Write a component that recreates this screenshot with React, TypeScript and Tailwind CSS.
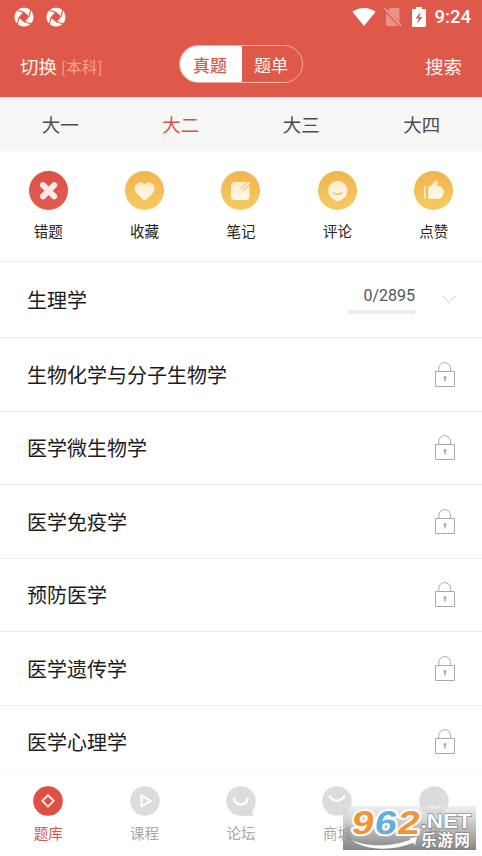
import React from "react";

const subjects = ["生物化学与分子生物学", "医学微生物学", "医学免疫学", "预防医学", "医学遗传学", "医学心理学"];

const AppMark = () => (
  <svg width="20" height="20" viewBox="0 0 20 20">
    <circle cx="10" cy="10" r="9.6" fill="#fffaf5" />
    <path d="M9.6 4.6L15.4 9.6L10.4 15.4L4.6 10.4Z" fill="#de594a" />
    {[0, 90, 180, 270].map((a) => (
      <path key={a} d="M9.8 5.2L2.8 3.2" fill="none" stroke="#de594a" strokeWidth="1.1" transform={`rotate(${a} 10 10)`} />
    ))}
  </svg>
);

const StatusBar = () => (
  <div className="flex h-[34px] items-center justify-between pl-[14px] pr-[11px]">
    <div className="flex gap-3">
      <AppMark />
      <AppMark />
    </div>
    <div className="flex items-center">
      <svg width="24" height="20" viewBox="0 0 24 20" className="mr-[8px]">
        <path d="M.5 5C7-.5 17-.5 23.5 5L12 19Z" fill="#fff" />
      </svg>
      <svg width="18" height="20" viewBox="0 0 18 20" className="mr-[10px]">
        <path d="M2 5.5L6 1h8.5a1 1 0 0 1 1 1v16a1 1 0 0 1-1 1H3a1 1 0 0 1-1-1Z" fill="#eb9085" />
        <path d="M0 2L17 19" stroke="#de594a" strokeWidth="3" />
        <path d="M.5 1.5L17 18.5" stroke="#f0a69d" strokeWidth="1.3" />
      </svg>
      <svg width="14" height="20" viewBox="0 0 14 20" className="mr-[9px]">
        <path d="M4 0h6v2h3a1 1 0 0 1 1 1v16a1 1 0 0 1-1 1H1a1 1 0 0 1-1-1V3a1 1 0 0 1 1-1h3Z" fill="#fff" />
        <path d="M8.5 5L3.5 11.5H7L5 17L10.5 10H7.3Z" fill="#de594a" />
      </svg>
      <span className="font-[Roboto] text-[18.5px] font-medium leading-5 text-white">9:24</span>
    </div>
  </div>
);

const QuickGlyph = ({ index }: { index: number }) => {
  const color = "#fff4e3";
  return (
    <svg width="39" height="39" viewBox="0 0 39 39">
      <defs>
        <linearGradient id={`disc${index}`} x1="0" y1="0" x2="0" y2="1">
          <stop offset="0" stopColor={index ? "#f2b44d" : "#db5345"} />
          <stop offset="1" stopColor={index ? "#f5cb62" : "#e25c50"} />
        </linearGradient>
        <linearGradient id={`glyph${index}`} x1="0" y1="0" x2="0" y2="1">
          <stop offset="0" stopColor="#fdeac8" />
          <stop offset="1" stopColor="#fffaf0" />
        </linearGradient>
      </defs>
      <circle cx="19.5" cy="19.5" r="19.5" fill={`url(#disc${index})`} />
      {index === 0 && <path d="M14 14.2L25.2 25.4M25.2 14.2L14 25.4" stroke="#ffeae7" strokeWidth="6" strokeLinecap="round" />}
      {index === 1 && <path d="M19.7 13.1C22.6 10.4 26.3 11.4 28.2 13.5C30.6 16.3 29.9 20.2 27 23.2L21.7 28.2Q19.7 30 17.7 28.2L12.4 23.2C9.4 20.2 8.9 16.3 11.3 13.5C13.2 11.4 16.8 10.4 19.7 13.1Z" fill={`url(#glyph${index})`} />}
      {index === 2 && (
        <>
          <rect x="10" y="11" width="18.5" height="18" rx="4" fill={`url(#glyph${index})`} />
          <path d="M20.8 18.8L28 11.8" stroke="#f3bd54" strokeWidth="3.8" />
          <path d="M20.6 19L28 11.8" stroke={color} strokeWidth="1.8" strokeLinecap="round" />
        </>
      )}
      {index === 3 && (
        <>
          <path d="M19.8 10A9.6 9.6 0 0 1 23.5 28.5L20.2 30.2L16.7 28.7A9.6 9.6 0 0 1 19.8 10Z" fill={`url(#glyph${index})`} />
          <path d="M15.4 21.8Q19.6 25.3 23.8 21.8" fill="none" stroke="#f1ba52" strokeWidth="1.4" strokeLinecap="round" />
        </>
      )}
      {index === 4 && (
        <>
          <path d="M11 16V27.2" stroke={color} strokeWidth="1.6" strokeLinecap="round" />
          <path d="M14.3 16.2Q18 14.7 20.5 10.2Q21.2 9 22.6 9.6Q24 10.3 23.7 12.8L23.2 15H25.5Q29.8 16.5 29.8 21.2Q29.7 26 25.5 27.8H15.3Q14.3 27.8 14.3 26.8Z" fill={`url(#glyph${index})`} />
        </>
      )}
    </svg>
  );
};

const Lock = () => (
  <svg width="20" height="25" viewBox="0 0 20 25" fill="none" stroke="#aaa">
    <path d="M3.8 9V6.5a5.9 5.9 0 0 1 11.8 0V9" />
    <path d="M.5 9.5h19v15H.5Z" />
    <path d="M10 14.6V19.6" strokeWidth="1.4" />
    <circle cx="10" cy="15.6" r="1.5" fill="#aaa" stroke="none" />
  </svg>
);

const NavGlyph = ({ index }: { index: number }) => (
  <svg width="30" height="30" viewBox="0 0 30 30" fill="none" stroke="#fff" strokeWidth="2" strokeLinecap="round" strokeLinejoin="round">
    <circle cx="15" cy="15" r="14.8" fill={index ? "#dcdcdc" : "#df5044"} stroke="none" />
    {index === 2 && <path d="M29 20L26.2 25.5Q26.5 28 27.5 29.8H15Z" fill="#dcdcdc" stroke="none" />}
    {index === 0 && <path d="M15 9.2L20.7 14.9L15 20.6L9.3 14.9Z" stroke="#ffeae7" />}
    {index === 1 && <path d="M11.5 9.5V20.5L20.8 15Z" />}
    {index === 2 && <path d="M8.2 12.5C9.5 20.3 20 20.3 21.8 12.5" strokeWidth="2.3" />}
    {index === 3 && <path d="M7.8 10.3C11 16.2 19 16.2 22.2 10.3" strokeWidth="2.3" />}
    {index === 4 && <path d="M9.8 20.2Q15 23.8 20.2 20.2" />}
  </svg>
);

const Watermark = () => (
  <svg className="absolute left-[343px] top-[806px]" width="133" height="44" viewBox="0 0 133 44">
    <defs>
      <linearGradient id="shade" x1="0" y1="0" x2="0" y2="1">
        <stop offset="0" stopColor="#e6e6e6" stopOpacity=".6" />
        <stop offset=".5" stopColor="#a0a0a0" stopOpacity=".7" />
        <stop offset="1" stopColor="#707070" stopOpacity=".85" />
      </linearGradient>
    </defs>
    <rect width="133" height="44" fill="url(#shade)" />
    <path d="M7 33C25 42 51 40 67 33.5L66 32L74.5 30.5L72 40L70 37C49 46 20 45 7 33Z" fill="#fff" stroke="#777" strokeWidth=".4" />
    <g fontFamily="Liberation Sans, sans-serif" fontWeight="bold" strokeLinejoin="round">
      <g transform="translate(7.5 28) skewX(-9) scale(1.2 1)" fontSize="33" letterSpacing=".4">
        <text stroke="#fff" strokeWidth="4" paintOrder="stroke">
          <tspan fill="#f29334" x="0">9</tspan>
          <tspan fill="#62aee0" x="19.2">6</tspan>
          <tspan fill="#f29334" x="38.4">2</tspan>
        </text>
      </g>
      <text transform="translate(77.5 22) scale(1.15 1)" fontSize="19.5" fill="#fff" stroke="#777" strokeWidth="1.2" paintOrder="stroke">.NET</text>
      <text x="78" y="39.5" fontSize="15.6" letterSpacing="1" fontFamily="Noto Sans CJK SC, sans-serif" fill="#fff" stroke="#777" strokeWidth="1.2" paintOrder="stroke">乐游网</text>
    </g>
  </svg>
);

export default function App() {
  return (
    <div className="relative flex h-[856px] w-[482px] flex-col overflow-hidden bg-white font-['Noto_Sans_CJK_SC',sans-serif]">
      <header className="h-[98px] shrink-0 border-b border-[#fbd5ce] bg-[#de594a]">
        <StatusBar />
        <div className="grid h-[62px] grid-cols-3 items-center px-5 text-[#fff4ef]">
          <div className="flex items-center whitespace-nowrap pt-[3px]">
            <span className="text-[18.5px]">切换</span>
            <span className="ml-[4px] text-[15.5px] text-[#f9a095]">[本科]</span>
          </div>
          <div className="mx-auto flex h-[38px] w-[124px] shrink-0 -translate-y-[1px] overflow-hidden rounded-full border border-[#f4aea4] text-[17px]">
            <div className="flex w-[62px] items-center justify-center bg-white pr-[2px] pt-[1px] font-medium text-[#d65b4f]">真题</div>
            <div className="flex flex-1 items-center justify-center pr-[2px] pt-[1px]">题单</div>
          </div>
          <div className="pt-[3px] text-right text-[18.5px]">搜索</div>
        </div>
      </header>
      <div className="grid h-[53px] shrink-0 grid-cols-4 items-center bg-[#f6f6f6] text-center text-[18.5px] text-[#4c4c4c]">
        {["大一", "大二", "大三", "大四"].map((t) => (
          <div key={t} className={t === "大二" ? "text-[#d65348]" : ""}>{t}</div>
        ))}
      </div>
      <div className="grid h-[111px] shrink-0 grid-cols-5 border-b border-[#f1f1f1] pt-5">
        {["错题", "收藏", "笔记", "评论", "点赞"].map((t, i) => (
          <div key={t} className="flex flex-col items-center">
            <QuickGlyph index={i} />
            <span className="mt-[11px] text-[14.5px] leading-5 text-[#222]">{t}</span>
          </div>
        ))}
      </div>
      <main className="h-[509px] shrink-0 overflow-hidden text-[20px] text-[#1c1c1c]">
        <div className="flex h-[76px] items-center justify-between border-b border-[#e9e9e9] pl-[27px] pr-[26px]">
          <span>生理学</span>
          <div className="flex items-center">
            <div className="mr-[27px] w-[67px]">
              <div className="pt-px text-right font-[Roboto] text-[16px] leading-5 text-[#555]">0/2895</div>
              <div className="mt-[4px] h-1 bg-[#ebebeb]" />
            </div>
            <svg width="14" height="9" viewBox="0 0 14 9" fill="none" stroke="#ccc">
              <path d="M.8 1L7 7.8L13.2 1" />
            </svg>
          </div>
        </div>
        {subjects.map((s) => (
          <div key={s} className="flex h-[73.5px] items-center justify-between border-b border-[#efefef] pl-[27px] pr-[27px]">
            <span className="pt-[1px]">{s}</span>
            <Lock />
          </div>
        ))}
      </main>
      <nav className="grid flex-1 grid-cols-5 border-t border-[#fafafa] bg-white pt-[14px]">
        {["题库", "课程", "论坛", "商城", "我"].map((t, i) => (
          <div key={t} className={i ? "flex flex-col items-center text-[#a9a9a9]" : "flex flex-col items-center text-[#d95549]"}>
            <NavGlyph index={i} />
            <span className="mt-[7px] text-[14.5px] leading-5">{t}</span>
          </div>
        ))}
      </nav>
      <Watermark />
    </div>
  );
}
